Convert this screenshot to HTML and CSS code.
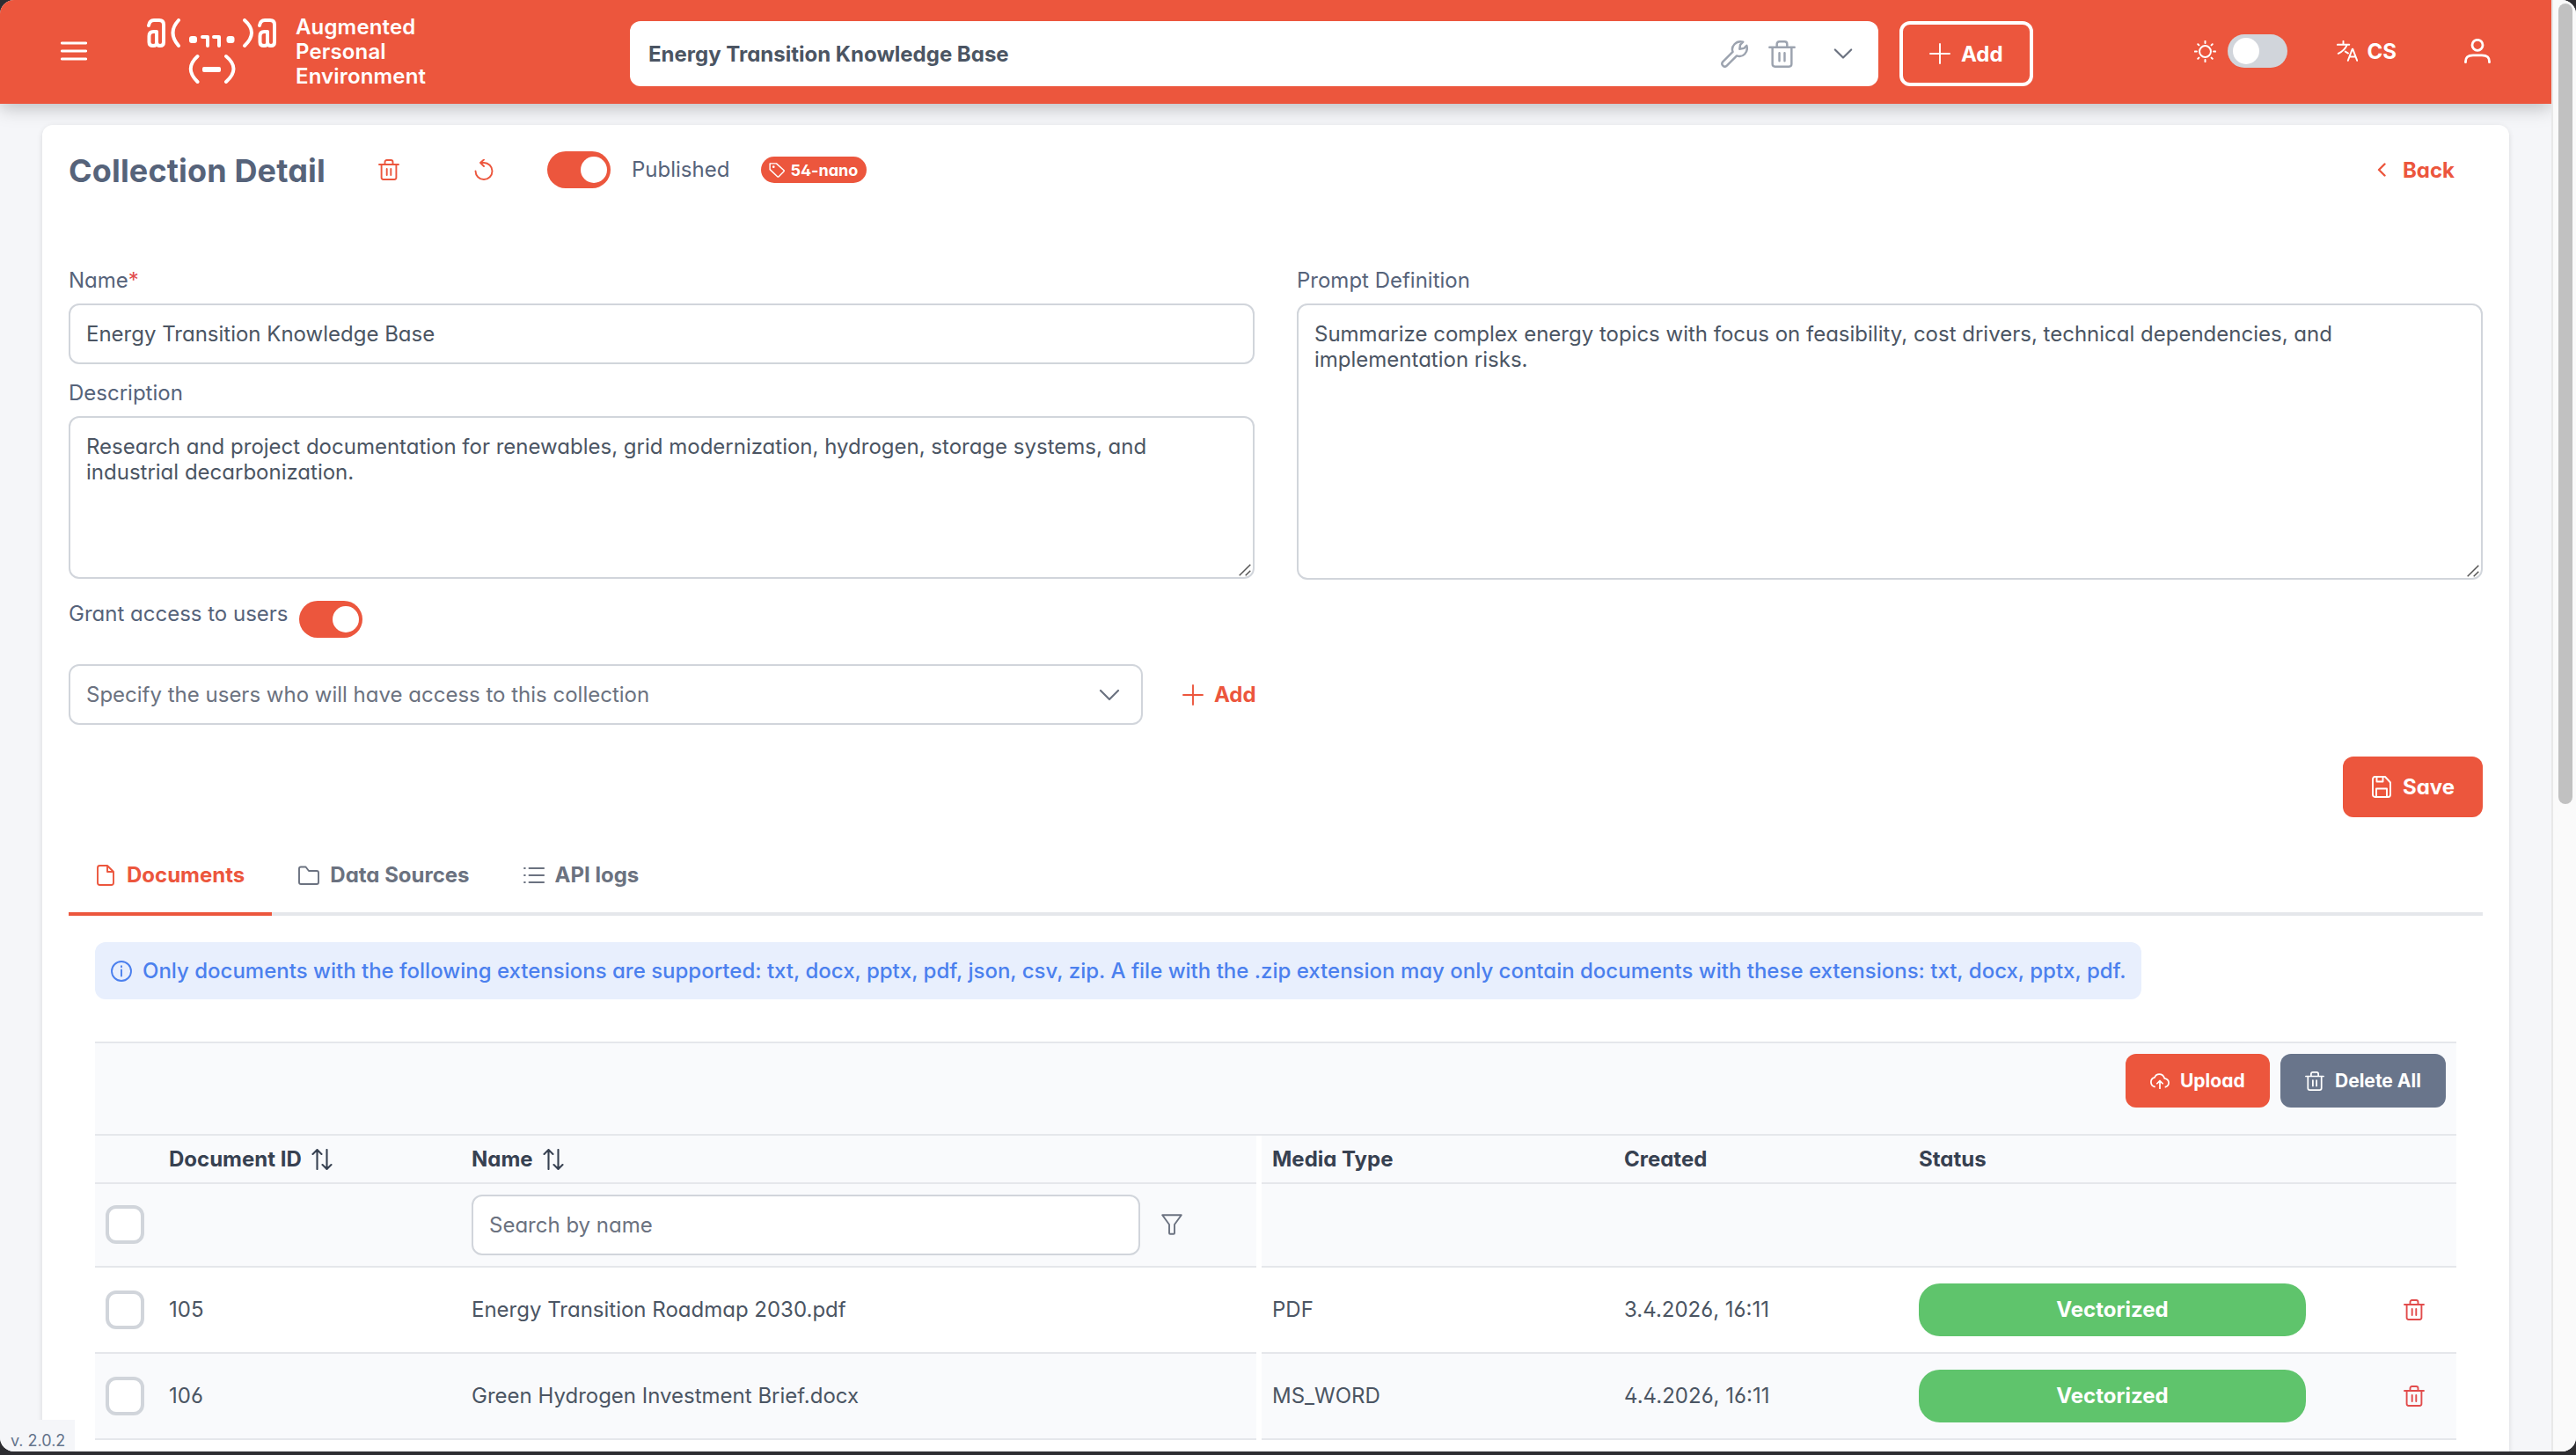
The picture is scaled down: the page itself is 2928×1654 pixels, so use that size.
FILE: index.html
```html
<!DOCTYPE html>
<html lang="en">
<head>
    <meta charset="UTF-8">
    <title>Augmented Personal Environment</title>
    <link rel="stylesheet" href="styles.css">
</head>
<body>

    <!-- Shared icons -->
    <svg class="sprite" width="0" height="0">
        <symbol id="i-trash" viewBox="0 0 24 24">
            <path d="M1 6h22M7.500 6V3.200Q7.500 1 9.700 1h4.600q2.200 0 2.200 2.200V6M3.600 6v14.800Q3.600 23 5.800 23h12.400q2.200 0 2.200-2.200V6M9.700 11v7M14.300 11v7"/>
        </symbol>
        <symbol id="i-plus" viewBox="0 0 24 24">
            <path d="M12 1v22M1 12h22"/>
        </symbol>
        <symbol id="i-down" viewBox="0 0 24 24">
            <path d="M2 7l10 10L22 7"/>
        </symbol>
        <symbol id="i-sort" viewBox="0 0 24 24">
            <path d="M6.500 23V1.500M1.500 6l5-5 5 5M17.500 1v21.500M12.500 18l5 5 5-5"/>
        </symbol>
        <symbol id="i-grip" viewBox="0 0 14 14">
            <path d="M.7 13.300L13.300.7M7.700 13.300l5.600-5.600"/>
        </symbol>
    </svg>

    <div class="window">
        <div class="page">

            <!-- Top bar -->
            <header class="topbar">
                <svg class="icon menu" viewBox="0 0 30 22"><path d="M1.300 2h27.400M1.300 11h27.400M1.300 20h27.400"/></svg>

                <svg class="logo" viewBox="0 0 147 74">
                    <g id="ear">
                        <path d="M2 8Q3 2 8 2h6q5 0 5 5v20q0 4-4 4t-4-4V15H7.500Q2.500 15 2.500 20v7q0 4 4.500 4t4-4"/>
                    </g>
                    <use href="#ear" x="126"/>
                    <path d="M36 2Q23 16 36 31M111 2Q127 16 111 31M57.500 43Q42 57 57.500 72M90 43Q107 57 90 72"/>
                    <path d="M63 21h6v10M76 21h6v10"/>
                    <rect class="solid" x="48" y="20" width="9" height="8" rx="3"/>
                    <rect class="solid" x="90.500" y="20" width="9" height="8" rx="3"/>
                    <rect class="solid" x="63" y="55" width="21" height="6" rx="2"/>
                </svg>
                <div class="brand">Augmented<br>Personal<br>Environment</div>

                <div class="collection-select">
                    <span>Energy Transition Knowledge Base</span>
                    <svg class="icon wrench" viewBox="0 0 24 24"><path d="M16.500 7.500l.6-3.800L19.500 1.300Q15 .2 12 3.300T10.500 10L1.800 18.700q-1.600 1.800 0 3.500t3.500 0L14 13.500q4 1.500 7-1.500t1.700-7.500l-2.400 2.400-3.800.6"/></svg>
                    <svg class="icon bin"><use href="#i-trash"/></svg>
                    <svg class="icon arrow"><use href="#i-down"/></svg>
                </div>

                <button class="btn btn-outline"><svg class="icon"><use href="#i-plus"/></svg>Add</button>

                <div class="topbar-right">
                    <svg class="icon sun" viewBox="0 0 24 24"><circle cx="12" cy="12" r="6.200"/><path d="M12 .8v2M12 21.200v2M.8 12h2M21.200 12h2M4.100 4.100l1.100 1.100M18.800 18.800l1.100 1.100M4.100 19.900l1.100-1.100M18.800 5.200l1.100-1.100"/></svg>
                    <span class="switch switch-off"></span>
                    <svg class="icon lang" viewBox="0 0 24 24"><path d="M.8 4.800h13.500M7.500.8v4M11.800 4.800Q9 11.500 1.800 14.800M9.800 12.600l3.200 2M12.800 22.800l4.900-13h.6l4.900 13M14.500 18.500h7"/></svg>
                    <b class="locale">CS</b>
                    <svg class="icon user" viewBox="0 0 30 28"><circle cx="15" cy="7.300" r="6"/><path d="M1.500 26.700Q1 18.800 10 18.800h10q9 0 8.500 7.900"/></svg>
                </div>
            </header>

            <!-- Collection card -->
            <main class="card">
                <div class="card-head">
                    <h1>Collection Detail</h1>
                    <svg class="icon head-trash"><use href="#i-trash"/></svg>
                    <svg class="icon head-reset" viewBox="0 0 24 24"><path d="M2.500 13.500a9.500 9.500 0 1 0 9.500-9.500H8M12 .5L8 4l4 4"/></svg>
                    <span class="switch"></span>
                    <span class="published">Published</span>
                    <span class="tag"><svg class="icon" viewBox="0 0 24 24"><path d="M1.500 2.500h9.800L22.500 12.600q1 1 0 2l-7.600 7.600q-1 1-2 0L1.500 11.500z"/><circle cx="7" cy="7.500" r=".9"/></svg>54-nano</span>
                    <a class="back"><svg class="icon" viewBox="0 0 12 16"><path d="M9.500 1.500L3 8l6.500 6.500"/></svg>Back</a>
                </div>

                <div class="form">
                    <div class="form-col">
                        <label>Name<span class="required">*</span></label>
                        <input class="field" type="text" value="Energy Transition Knowledge Base">
                        <label class="label-gap">Description</label>
                        <div class="area">
                            <textarea class="field description">Research and project documentation for renewables, grid modernization, hydrogen, storage systems, and industrial decarbonization.</textarea>
                            <svg class="grip"><use href="#i-grip"/></svg>
                        </div>
                        <div class="grant">
                            <span>Grant access to users</span>
                            <span class="switch"></span>
                        </div>
                        <div class="users">
                            <div class="field users-select">
                                <span>Specify the users who will have access to this collection</span>
                                <svg class="icon"><use href="#i-down"/></svg>
                            </div>
                            <a class="users-add"><svg class="icon"><use href="#i-plus"/></svg>Add</a>
                        </div>
                    </div>
                    <div class="form-col">
                        <label>Prompt Definition</label>
                        <div class="area">
                            <textarea class="field prompt">Summarize complex energy topics with focus on feasibility, cost drivers, technical dependencies, and implementation risks.</textarea>
                            <svg class="grip"><use href="#i-grip"/></svg>
                        </div>
                    </div>
                </div>

                <div class="save-row">
                    <button class="btn btn-save"><svg class="icon" viewBox="0 0 22 25"><path d="M3.500 1H15l6 6.500V21q0 3-2.500 3h-15Q1 24 1 21V4Q1 1 3.500 1M5.500 1v5.500h7V1M5 24V14.500h12V24"/></svg>Save</button>
                </div>

                <!-- Tabs -->
                <nav class="tabs">
                    <a class="tab active"><svg class="icon" viewBox="0 0 24 24"><path d="M14 1H5.500Q3 1 3 3.500v17Q3 23 5.500 23h13q2.500 0 2.500-2.500V8zM14 1v7h7"/></svg>Documents</a>
                    <a class="tab"><svg class="icon" viewBox="0 0 24 24"><path d="M1 20V4.500Q1 2.500 3 2.500h5.500L12 7h9q2 0 2 2v11q0 2-2 2H3q-2 0-2-2z"/></svg>Data Sources</a>
                    <a class="tab"><svg class="icon" viewBox="0 0 24 24"><path d="M6.500 4h16.700M6.500 12h16.700M6.500 20h16.700M1 4h.8M1 12h.8M1 20h.8"/></svg>API logs</a>
                </nav>

                <section class="panel">
                    <div class="message">
                        <svg class="icon" viewBox="0 0 24 24"><circle cx="12" cy="12" r="11"/><path d="M12 10.500v7M12 6.300v1"/></svg>
                        <span>Only documents with the following extensions are supported: txt, docx, pptx, pdf, json, csv, zip. A file with the .zip extension may only contain documents with these extensions: txt, docx, pptx, pdf.</span>
                    </div>

                    <div class="toolbar">
                        <button class="btn btn-small"><svg class="icon" viewBox="0 0 24 24"><path d="M5.500 19Q1 17.500 1 13q0-4.500 4.500-5.500Q7 3.500 11.200 3.500q5 0 6.500 5Q23 9.500 23 14q0 4-4 5.300M12 21v-9M8.500 15L12 11.500l3.500 3.500"/></svg>Upload</button>
                        <button class="btn btn-small btn-gray"><svg class="icon"><use href="#i-trash"/></svg>Delete All</button>
                    </div>

                    <table class="docs">
                        <colgroup>
                            <col class="c-check"><col class="c-id"><col class="c-name"><col class="c-gap"><col class="c-type"><col class="c-date"><col class="c-status"><col>
                        </colgroup>
                        <thead>
                            <tr class="titles">
                                <th></th>
                                <th>Document ID<svg class="icon sort"><use href="#i-sort"/></svg></th>
                                <th>Name<svg class="icon sort"><use href="#i-sort"/></svg></th>
                                <th class="gap"></th>
                                <th>Media Type</th>
                                <th>Created</th>
                                <th>Status</th>
                                <th></th>
                            </tr>
                            <tr class="filters">
                                <th><span class="checkbox"></span></th>
                                <th></th>
                                <th>
                                    <div class="filter">
                                        <input class="field" type="text" placeholder="Search by name">
                                        <svg class="icon" viewBox="0 0 24 24"><path d="M1.200 1.200h21.600L15 12v9.800q0 1-1 1h-4q-1 0-1-1V12z"/></svg>
                                    </div>
                                </th>
                                <th class="gap"></th>
                                <th></th>
                                <th></th>
                                <th></th>
                                <th></th>
                            </tr>
                        </thead>
                        <tbody>
                            <tr>
                                <td><span class="checkbox"></span></td>
                                <td>105</td>
                                <td>Energy Transition Roadmap 2030.pdf</td>
                                <td class="gap"></td>
                                <td>PDF</td>
                                <td>3.4.2026, 16:11</td>
                                <td><span class="status">Vectorized</span></td>
                                <td><svg class="icon row-trash"><use href="#i-trash"/></svg></td>
                            </tr>
                            <tr>
                                <td><span class="checkbox"></span></td>
                                <td>106</td>
                                <td>Green Hydrogen Investment Brief.docx</td>
                                <td class="gap"></td>
                                <td>MS_WORD</td>
                                <td>4.4.2026, 16:11</td>
                                <td><span class="status">Vectorized</span></td>
                                <td><svg class="icon row-trash"><use href="#i-trash"/></svg></td>
                            </tr>
                        </tbody>
                    </table>
                </section>
            </main>
        </div>

        <div class="scrollbar"><div class="thumb"></div></div>
        <div class="version">v. 2.0.2</div>
    </div>

</body>
</html>
```
FILE: styles.css
```css
* {
    margin: 0;
    padding: 0;
    box-sizing: border-box;
}

body {
    height: 1654px;
    overflow: hidden;
    background: #2d2d31;
    color: #4b5563;
    font-family: 'Inter', 'Liberation Sans', sans-serif;
    font-size: 24px;
    line-height: 29px;
    font-feature-settings: "cv02", "cv03", "cv04", "cv11";
}

input, textarea, button {
    font: inherit;
    font-feature-settings: inherit;
    color: inherit;
}

.sprite {
    position: absolute;
}

.window {
    position: relative;
    display: flex;
    height: 1650px;
    overflow: hidden;
    border-radius: 16px;
    background: #f5f6f9;
}

.page {
    width: 2900px;
    height: 1650px;
    overflow: hidden;
}

.icon {
    width: 24px;
    height: 24px;
    flex: none;
    fill: none;
    stroke: currentColor;
    stroke-width: 1.9;
    stroke-linecap: round;
    stroke-linejoin: round;
}

/* Top bar */
.topbar {
    display: flex;
    align-items: center;
    height: 118px;
    padding-left: 69px;
    background: #ec563d;
    color: #fff;
    box-shadow: 0 4px 20px rgba(0, 0, 0, 0.25);
}

.menu {
    width: 30px;
    height: 22px;
    margin-bottom: 3px;
    stroke-width: 2.8;
}

.logo {
    width: 147px;
    height: 74px;
    margin: 0 0 2px 68px;
    fill: none;
    stroke: #fff;
    stroke-width: 4;
    stroke-linecap: round;
    stroke-linejoin: round;
}

.logo .solid {
    fill: #fff;
    stroke: none;
}

.brand {
    width: 380px;
    margin-left: 22px;
    font-weight: 600;
    line-height: 28px;
    letter-spacing: 0.15px;
    font-feature-settings: normal;
}

.collection-select {
    display: flex;
    align-items: center;
    width: 1419px;
    height: 74px;
    margin-top: 4px;
    padding: 0 29px 0 21px;
    border-radius: 12px;
    background: #fff;
    color: #4b5563;
    font-weight: 700;
}

.collection-select span {
    flex: 1;
}

.collection-select .icon {
    width: 31px;
    height: 31px;
    color: #9ca3af;
}

.collection-select .bin {
    margin: 0 43px 0 23px;
}

.collection-select .arrow {
    width: 22px;
    height: 22px;
    color: #6b7280;
    stroke-width: 2.4;
}

.btn {
    display: flex;
    align-items: center;
    border: none;
    border-radius: 12px;
    background: #ec563d;
    color: #fff;
    font-weight: 700;
}

.btn-outline {
    width: 152px;
    height: 74px;
    margin: 4px 0 0 24px;
    padding-left: 30px;
    border: 4px solid #fff;
    gap: 12px;
}

.topbar-right {
    display: flex;
    align-items: center;
    margin: 0 0 2px auto;
    padding-right: 69px;
}

.sun {
    width: 25px;
    height: 25px;
}

.switch {
    width: 72px;
    height: 42px;
    padding: 6px 4px;
    flex: none;
    border-radius: 21px;
    background: #ec563d;
}

.switch::before {
    content: "";
    display: block;
    width: 30px;
    height: 30px;
    margin-left: auto;
    border-radius: 50%;
    background: #fff;
}

.switch-off {
    width: 68px;
    height: 38px;
    margin: 0 56px 0 13px;
    padding: 4px 6px;
    background: #d1d5db;
}

.switch-off::before {
    margin-left: 0;
}

.locale {
    margin: 0 77px 0 11px;
}

.user {
    width: 30px;
    height: 28px;
    stroke-width: 2.8;
}

/* Card */
.card {
    width: 2804px;
    height: 1700px;
    margin: 24px 0 0 48px;
    padding: 0 30px;
    border-radius: 12px;
    background: #fff;
    box-shadow: 0 2px 6px rgba(0, 0, 0, 0.12);
}

.card-head {
    display: flex;
    align-items: center;
    height: 102px;
    color: #56637a;
}

h1 {
    width: 352px;
    padding-top: 2px;
    font-size: 36px;
    font-weight: 700;
    line-height: 44px;
    letter-spacing: 0.15px;
}

.head-trash,
.head-reset {
    margin-right: 84px;
    color: #ec563d;
}

.head-reset {
    margin-right: 60px;
}

.published {
    margin: 0 36px 1px 24px;
}

.tag {
    display: flex;
    align-items: center;
    height: 30px;
    padding: 0 10px 0 9px;
    gap: 6px;
    border-radius: 15px;
    background: #ec563d;
    color: #fff;
    font-size: 18px;
    font-weight: 700;
}

.tag .icon {
    width: 18px;
    height: 18px;
}

.back {
    display: flex;
    align-items: center;
    margin-left: auto;
    padding-right: 32px;
    gap: 18px;
    color: #ec563d;
    font-weight: 700;
}

.back .icon {
    width: 12px;
    height: 16px;
    stroke-width: 2.4;
}

/* Form */
.form {
    display: grid;
    grid-template-columns: 1348px 1348px;
    gap: 48px;
    padding-top: 60px;
}

.form-col label {
    display: block;
    height: 41px;
    color: #56637a;
}

.form-col .label-gap {
    margin-top: 18px;
}

.required {
    color: #e24c4c;
}

.field {
    display: block;
    width: 100%;
    height: 69px;
    padding: 0 18px;
    border: 2px solid #d1d5db;
    border-radius: 12px;
    background: #fff;
    outline: none;
}

textarea.field {
    padding: 18px;
    resize: none;
    overflow: hidden;
}

.description {
    height: 185px;
}

.prompt {
    height: 314px;
}

.area {
    position: relative;
}

.grip {
    position: absolute;
    right: 4px;
    bottom: 3px;
    width: 14px;
    height: 14px;
    stroke: #555;
    stroke-width: 1.5;
}

.grant {
    display: flex;
    height: 72px;
    padding-top: 25px;
    color: #56637a;
}

.grant span:first-child {
    margin-right: 12px;
}

.users {
    display: flex;
    align-items: center;
    padding-top: 25px;
}

.users-select {
    display: flex;
    align-items: center;
    justify-content: space-between;
    width: 1221px;
    flex: none;
    padding-right: 24px;
    color: #6b7280;
}

.users-select .icon {
    stroke-width: 2.2;
}

.users-add {
    display: flex;
    align-items: center;
    margin-left: 45px;
    gap: 12px;
    color: #ec563d;
    font-weight: 700;
}

.save-row {
    display: flex;
    justify-content: flex-end;
    padding-top: 36px;
}

.btn-save {
    width: 159px;
    height: 69px;
    padding-left: 33px;
    gap: 13px;
}

.btn-save .icon {
    width: 22px;
    height: 25px;
}

/* Tabs */
.tabs {
    display: flex;
    height: 91px;
    margin-top: 21px;
    border-bottom: 4px solid #e5e7eb;
}

.tab {
    display: flex;
    align-items: center;
    height: 91px;
    padding: 2px 31px 0 30px;
    gap: 12px;
    border-bottom: 4px solid transparent;
    color: #6b7280;
    font-weight: 700;
}

.tab.active {
    border-color: #ec563d;
    color: #ec563d;
}

/* Documents */
.panel {
    padding: 30px;
}

.message {
    display: flex;
    align-items: center;
    width: 2326px;
    height: 65px;
    padding-left: 18px;
    gap: 12px;
    border-radius: 12px;
    background: #e8effd;
    color: #4b80ee;
    font-weight: 500;
    white-space: nowrap;
}

.toolbar {
    display: flex;
    justify-content: flex-end;
    height: 107px;
    margin-top: 48px;
    padding: 12px;
    gap: 12px;
    border-top: 2px solid #e5e7eb;
    border-bottom: 2px solid #e5e7eb;
    background: #f9fafc;
}

.btn-small {
    width: 164px;
    height: 61px;
    padding-left: 28px;
    gap: 12px;
    font-size: 21px;
}

.btn-small .icon {
    width: 22px;
    height: 22px;
}

.btn-gray {
    width: 188px;
    background: #69758b;
}

.docs {
    width: 2684px;
    table-layout: fixed;
    border-spacing: 0;
}

.c-check { width: 72px; }
.c-id { width: 344px; }
.c-name { width: 904px; }
.c-gap { width: 6px; }
.c-type { width: 400px; }
.c-date { width: 335px; }
.c-status { width: 551px; }

.docs th,
.docs td {
    height: 98px;
    padding: 0 12px 1px;
    border-bottom: 2px solid #e5e7eb;
    text-align: left;
    vertical-align: middle;
}

.docs th {
    background: #f9fafc;
    color: #374151;
}

.docs .titles th {
    height: 55px;
}

.docs .filters th {
    height: 95px;
    font-weight: 400;
}

.docs tbody tr:nth-child(even) td {
    background: #f9fafc;
}

.docs .gap.gap {
    padding: 0;
    border: none;
    background: #fff;
}

.sort {
    margin-left: 11px;
    vertical-align: -4px;
    stroke-width: 2.1;
}

.checkbox {
    display: block;
    width: 44px;
    height: 44px;
    border: 4px solid #d1d5db;
    border-radius: 12px;
    background: #fff;
}

.filter {
    display: flex;
    align-items: center;
    gap: 24px;
    color: #6b7280;
}

.filter .field {
    width: 760px;
}

.filter .field::placeholder {
    color: #6b7280;
}

.status {
    display: block;
    width: 440px;
    height: 60px;
    border-radius: 24px;
    background: #5fc46c;
    color: #fff;
    font-weight: 700;
    line-height: 59px;
    text-align: center;
}

.row-trash {
    display: block;
    color: #e24c4c;
}

/* Scrollbar and version badge */
.scrollbar {
    width: 28px;
    padding: 4px 4px 0 6px;
    border-left: 2px solid #e8e8e8;
    background: #fafafa;
}

.thumb {
    height: 910px;
    border-radius: 8px;
    background: #c1c1c1;
}

.version {
    position: absolute;
    left: 0;
    bottom: 0;
    width: 85px;
    height: 36px;
    padding: 10px 0 0 12px;
    background: #f5f6f9;
    color: #64748b;
    font-size: 18px;
    line-height: 28px;
}
```
